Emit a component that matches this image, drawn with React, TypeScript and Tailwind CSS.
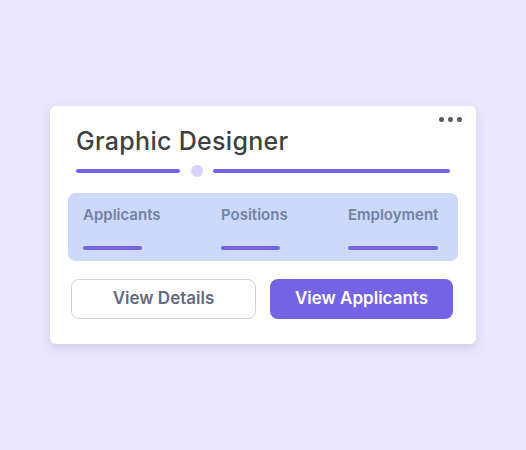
export default function App() {
  const stats = [
    { label: "Applicants", bar: "w-[59px]" },
    { label: "Positions", bar: "w-[59px]" },
    { label: "Employment", bar: "w-[90px]" },
  ];

  return (
    <div className="w-[526px] h-[450px] bg-[#ebe7fe] flex items-center justify-center font-['Inter',sans-serif]">
      <div className="relative w-[426px] h-[238px] bg-white rounded-[6px] shadow-[0_4px_10px_rgba(90,80,150,0.18)] px-[18px] pt-[21px]">
        {/* more menu */}
        <div className="absolute top-[11px] right-[14px] flex gap-[4px]">
          <span className="w-[5px] h-[5px] rounded-full bg-[#5a5a5e]" />
          <span className="w-[5px] h-[5px] rounded-full bg-[#5a5a5e]" />
          <span className="w-[5px] h-[5px] rounded-full bg-[#5a5a5e]" />
        </div>

        <h1 className="pl-[8px] text-[25px] leading-[29px] font-medium text-[#404043] tracking-[0.3px]">
          Graphic Designer
        </h1>

        {/* progress */}
        <div className="mt-[9px] pl-[8px] pr-[8px] flex items-center">
          <div className="w-[104px] h-[4px] rounded-full bg-[#7563e6]" />
          <div className="ml-[11px] w-[12px] h-[12px] rounded-full bg-[#d7d1fb]" />
          <div className="ml-[10px] flex-1 h-[4px] rounded-full bg-[#7563e6]" />
        </div>

        {/* stats panel */}
        <div className="mt-[16px] h-[68px] rounded-[8px] bg-[#cdd9fa] pl-[15px] pr-[19px] pt-[12px] flex">
          {stats.map((s, i) => (
            <div
              key={s.label}
              className={
                i === 0 ? "w-[138px]" : i === 1 ? "w-[127px]" : "flex-1"
              }
            >
              <div className="text-[15px] leading-[20px] font-semibold text-[#7183a4]">
                {s.label}
              </div>
              <div className={`mt-[21px] h-[4px] rounded-full bg-[#7563e6] ${s.bar}`} />
            </div>
          ))}
        </div>

        {/* actions */}
        <div className="mt-[18px] pl-[3px] pr-[5px] flex gap-[14px]">
          <button className="flex-1 h-[40px] rounded-[8px] border border-[#d3d6dc] bg-white text-[17px] font-semibold text-[#636c80]">
            View Details
          </button>
          <button className="flex-1 h-[40px] rounded-[8px] bg-[#7563e6] text-[17px] font-semibold text-white">
            View Applicants
          </button>
        </div>
      </div>
    </div>
  );
}
